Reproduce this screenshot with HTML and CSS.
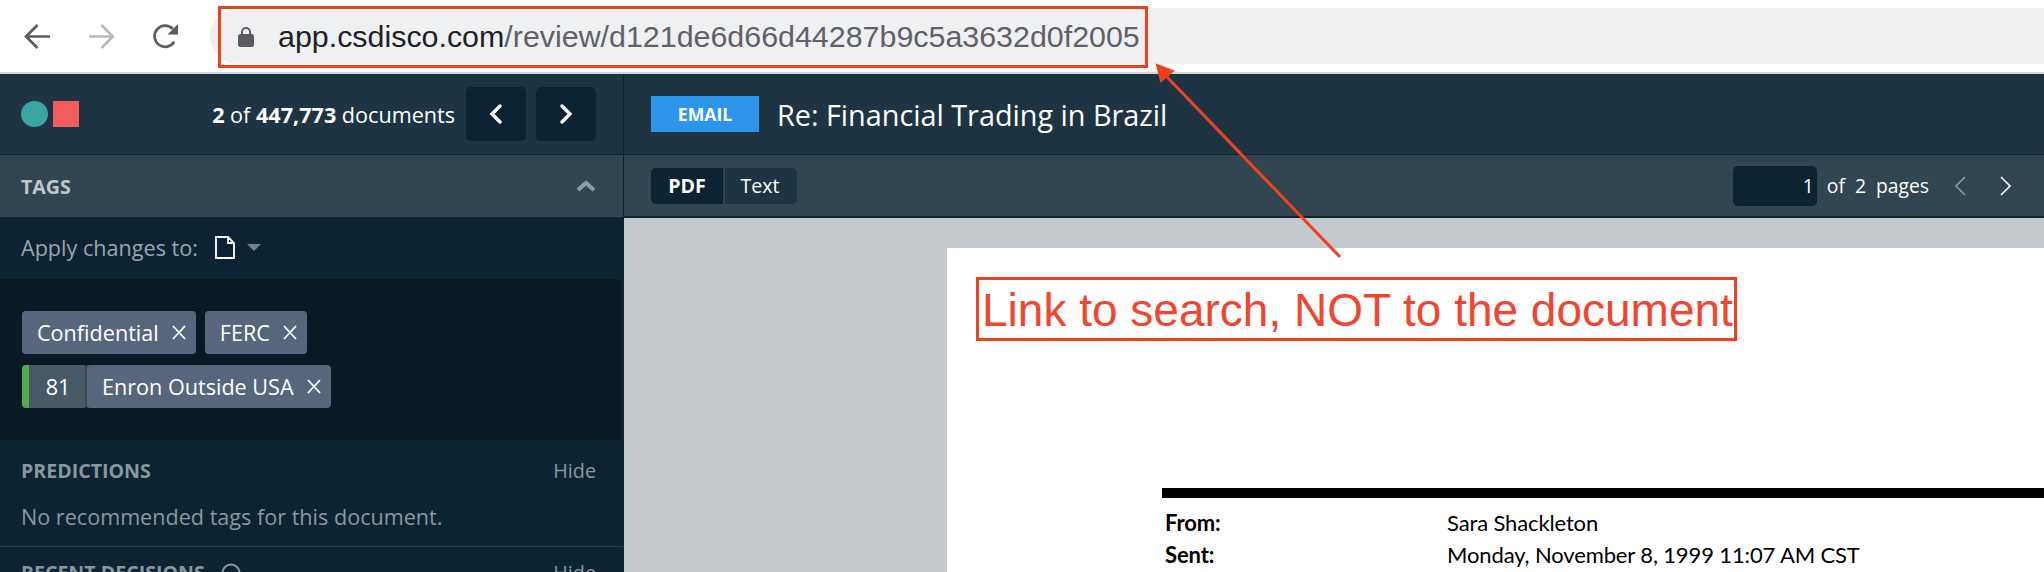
FILE: index.html
```html
<!DOCTYPE html>
<html lang="en">
<head>
<meta charset="utf-8">
<title>Review</title>
<link rel="stylesheet" href="styles.css">
</head>
<body>
<div class="chrome">
  <div class="nav">
    <svg class="nav-icon" viewBox="0 0 26 26"><path d="M25 13H2M13 2 2 13l11 11" fill="none" stroke="#5a5c61" stroke-width="2.6"/></svg>
    <svg class="nav-icon" viewBox="0 0 26 26"><path d="M1 13h23M13 2l11 11-11 11" fill="none" stroke="#b9babc" stroke-width="2.6"/></svg>
    <svg class="nav-icon" viewBox="0 0 28 28"><path d="M23 19.500A11 11 0 1 1 21.500 6" fill="none" stroke="#5a5c61" stroke-width="2.800"/><path d="M27 1v11H16z" fill="#5a5c61"/></svg>
  </div>
  <div class="url">
    <svg class="lock" viewBox="0 0 16 21"><path d="M4 9V6a4 4 0 0 1 8 0v3" fill="none" stroke="#5a5c61" stroke-width="2"/><rect y="8" width="16" height="13" rx="2.500" fill="#5a5c61"/></svg>
    <span class="url-text"><span class="host">app.csdisco.com</span>/review/d121de6d66d44287b9c5a3632d0f2005</span>
  </div>
</div>
<div class="app">
  <aside class="side">
    <div class="side-top">
      <div class="logo"><span class="dot"></span><span class="sq"></span></div>
      <div class="count"><b>2</b> of <b>447,773</b> documents</div>
      <button class="pager"><svg viewBox="0 0 14 22"><path d="M11 3 3 11l8 8" fill="none" stroke="#fff" stroke-width="3.400" stroke-linecap="round"/></svg></button>
      <button class="pager"><svg viewBox="0 0 14 22"><path d="m3 3 8 8-8 8" fill="none" stroke="#fff" stroke-width="3.400" stroke-linecap="round"/></svg></button>
    </div>
    <div class="tags-head">
      <span class="tags-title">TAGS</span>
      <svg class="collapse" viewBox="0 0 20 12"><path d="m2 10 8-7 8 7" fill="none" stroke="#8f9ba3" stroke-width="4"/></svg>
    </div>
    <div class="apply">
      <span>Apply changes to:</span>
      <svg class="file" viewBox="0 0 20 23"><path d="M1 1h12l6 6v15H1zM13 1v6h6" fill="none" stroke="#fff" stroke-width="1.800"/></svg>
      <span class="caret"></span>
    </div>
    <div class="tag-box">
      <div class="tag-row">
        <span class="tag">Confidential<svg class="x" viewBox="0 0 14 15"><path d="m1 1 12 13M13 1 1 14" fill="none" stroke="#fff" stroke-width="1.800"/></svg></span>
        <span class="tag">FERC<svg class="x" viewBox="0 0 14 15"><path d="m1 1 12 13M13 1 1 14" fill="none" stroke="#fff" stroke-width="1.800"/></svg></span>
      </div>
      <div class="tag-row">
        <span class="score">81</span>
        <span class="tag tag-joined">Enron Outside USA<svg class="x" viewBox="0 0 14 15"><path d="m1 1 12 13M13 1 1 14" fill="none" stroke="#fff" stroke-width="1.800"/></svg></span>
      </div>
    </div>
    <div class="section">
      <div class="section-head"><span class="section-title">PREDICTIONS</span><span class="hide">Hide</span></div>
      <div class="section-note">No recommended tags for this document.</div>
    </div>
    <div class="section section-last">
      <div class="section-head"><span class="section-title">RECENT DECISIONS<svg class="info" viewBox="0 0 20 20"><circle cx="10" cy="10" r="8.500" fill="none" stroke="#8a979f" stroke-width="2"/></svg></span><span class="hide">Hide</span></div>
    </div>
  </aside>
  <main class="main">
    <div class="doc-head">
      <span class="badge">EMAIL</span>
      <span class="doc-title">Re: Financial Trading in Brazil</span>
    </div>
    <div class="doc-tools">
      <div class="seg"><span class="seg-on">PDF</span><span class="seg-off">Text</span></div>
      <div class="pages">
        <span class="page-input">1</span>
        <span class="page-label">of&nbsp; 2&nbsp; pages</span>
        <svg class="page-arrow" viewBox="0 0 12 20"><path d="M11 1 2 10l9 9" fill="none" stroke="#8a979f" stroke-width="1.600"/></svg>
        <svg class="page-arrow" viewBox="0 0 12 20"><path d="m1 1 9 9-9 9" fill="none" stroke="#fff" stroke-width="1.600"/></svg>
      </div>
    </div>
    <div class="viewer">
      <div class="paper">
        <div class="rule"></div>
        <div class="mail-row"><b class="mail-key">From:</b><span>Sara Shackleton</span></div>
        <div class="mail-row"><b class="mail-key">Sent:</b><span>Monday, November 8, 1999 11:07 AM CST</span></div>
      </div>
    </div>
  </main>
</div>
<div class="url-mark"></div>
<div class="note">Link to search, NOT to the document</div>
<svg class="arrow" viewBox="0 0 2044 572"><path d="M1340 257 1167 77" fill="none" stroke="#f0401f" stroke-width="3"/><path d="M1157 65 1173 71 1161 81z" fill="#f0401f" stroke="#f0401f" stroke-width="2"/></svg>
</body>
</html>
```
FILE: styles.css
```css
* { box-sizing: border-box; }
html, body { margin: 0; height: 572px; overflow: hidden; background: #fff; }
body { position: relative; width: 2044px; font-family: "Open Sans", sans-serif; color: #fff; }

.chrome { height: 74px; border-bottom: 2px solid #d6d7d8; display: flex; align-items: flex-start; background: #fff; }
.nav { width: 210px; height: 72px; padding-left: 24px; display: flex; align-items: center; gap: 37px; flex: none; }
.nav-icon { width: 27px; height: 27px; flex: none; }
.url { flex: 1; height: 56px; margin-top: 8px; background: #eff0f2; border-radius: 28px 0 0 28px; display: flex; align-items: center; padding-left: 28px; font-family: "Liberation Sans", sans-serif; font-size: 30.4px; color: #5f6166; }
.lock { width: 16px; height: 21px; flex: none; margin-right: 24px; }
.host { color: #202124; }

.app { display: flex; height: 498px; }
.side { width: 624px; flex: none; background: #0d2331; border-right: 1px solid #0d2331; height: 498px; overflow: hidden; }
.side-top { height: 81px; background: #1e3442; border-bottom: 1px solid #0d2331; display: flex; align-items: center; padding: 0 27px 0 21px; }
.logo { display: flex; gap: 5px; margin-right: auto; }
.dot { width: 27px; height: 26px; border-radius: 50%; background: #3aa6a2; }
.sq { width: 26px; height: 26px; background: #f35c5c; }
.count { font-size: 21.6px; margin-right: 11px; }
.count b { font-weight: 700; }
.pager { width: 60px; height: 54px; margin: 0 0 0 10px; padding: 0; border: 0; border-radius: 5px; background: #0d2331; display: flex; align-items: center; justify-content: center; }
.count + .pager { margin-left: 0; }
.pager svg { width: 14px; height: 22px; }
.tags-head { height: 62px; background: #324652; display: flex; align-items: center; justify-content: space-between; padding: 0 27px 0 21px; }
.tags-title { font-size: 19.6px; font-weight: 700; color: #c0c6ca; }
.collapse { width: 20px; height: 12px; }
.apply { height: 61px; display: flex; align-items: center; padding-left: 21px; font-size: 21.6px; color: #9aa6ae; }
.file { width: 20px; height: 23px; margin-left: 17px; }
.caret { margin-left: 12px; border: 7px solid transparent; border-top: 7px solid #75828b; border-bottom: 0; }
.tag-box { height: 163px; width: 622px; background: #0a1a24; border: 1px solid #13242f; border-left: 0; border-radius: 0 5px 5px 0; padding: 32px 22px 0; }
.tag-row { display: flex; gap: 9px; margin-bottom: 11px; }
.tag { height: 43px; padding: 0 10px 0 15px; display: flex; align-items: center; border-radius: 4px; background: #58667c; font-size: 21.6px; white-space: pre; }
.x { width: 14px; height: 15px; margin-left: 13px; flex: none; }
.score { width: 65px; height: 43px; margin-right: -9px; display: flex; align-items: center; justify-content: center; background: #475a66; border-left: 7px solid #55a854; border-radius: 4px; font-size: 21.6px; }
.tag-joined { z-index: 1; box-shadow: -2px 0 0 #3c4a55; }
.section { height: 106px; border-bottom: 1px solid #2a3e4b; padding: 15px 27px 0 21px; color: #8a979f; font-size: 21.6px; }
.section-head { display: flex; justify-content: space-between; align-items: center; height: 28px; }
.section-title { font-size: 19.6px; font-weight: 700; color: #8a979f; }
.hide { font-size: 19.8px; }
.section-note { margin-top: 19px; line-height: 28px; }
.section-last { border: 0; padding-top: 11px; }
.info { width: 20px; height: 20px; margin-left: 16px; vertical-align: -3px; }

.main { flex: 1; min-width: 0; background: #c4c9cd; display: flex; flex-direction: column; }
.doc-head { height: 81px; background: #1e3442; border-bottom: 1px solid #0d2331; display: flex; align-items: center; padding-left: 27px; flex: none; }
.badge { width: 108px; height: 36px; background: #2d96ea; display: flex; align-items: center; justify-content: center; font-size: 17.6px; font-weight: 700; }
.doc-title { margin-left: 18px; font-size: 28.8px; }
.doc-tools { height: 63px; background: #324652; border-bottom: 2px solid #0d2331; display: flex; align-items: center; justify-content: space-between; padding: 0 32px 0 27px; flex: none; }
.seg { display: flex; gap: 2px; height: 36px; font-size: 19.6px; }
.seg span { width: 72px; display: flex; align-items: center; justify-content: center; }
.seg-on { background: #0d2331; font-weight: 700; border-radius: 5px 0 0 5px; }
.seg-off { background: #1e3442; border-radius: 0 5px 5px 0; padding-right: 2px; }
.pages { display: flex; align-items: center; font-size: 19.3px; }
.page-input { width: 84px; height: 40px; background: #0d2331; border-radius: 5px; display: flex; align-items: center; justify-content: flex-end; padding-right: 3px; }
.page-label { margin: 0 25px 0 10px; }
.page-arrow { width: 12px; height: 20px; }
.page-arrow + .page-arrow { margin-left: 34px; }
.viewer { flex: 1; min-height: 0; padding: 30px 0 0 323px; overflow: hidden; }
.paper { height: 400px; background: #fff; padding: 240px 0 0 215px; color: #000; font-family: Lato, sans-serif; font-size: 22px; }
.rule { height: 10px; background: #000; margin-bottom: 8px; }
.mail-row { display: flex; height: 32px; align-items: center; padding-left: 3px; letter-spacing: -0.13px; }
.mail-key { width: 282px; flex: none; }

.url-mark { position: absolute; left: 218px; top: 6px; width: 930px; height: 62px; border: 3px solid #f0401f; }
.note { position: absolute; left: 976px; top: 277px; width: 761px; height: 64px; border: 3px solid #f0401f; background: #fff; font-family: "Liberation Sans", sans-serif; font-size: 46px; line-height: 60px; color: #f0452e; padding-left: 3px; white-space: nowrap; }
.arrow { position: absolute; left: 0; top: 0; width: 2044px; height: 572px; pointer-events: none; }
```
